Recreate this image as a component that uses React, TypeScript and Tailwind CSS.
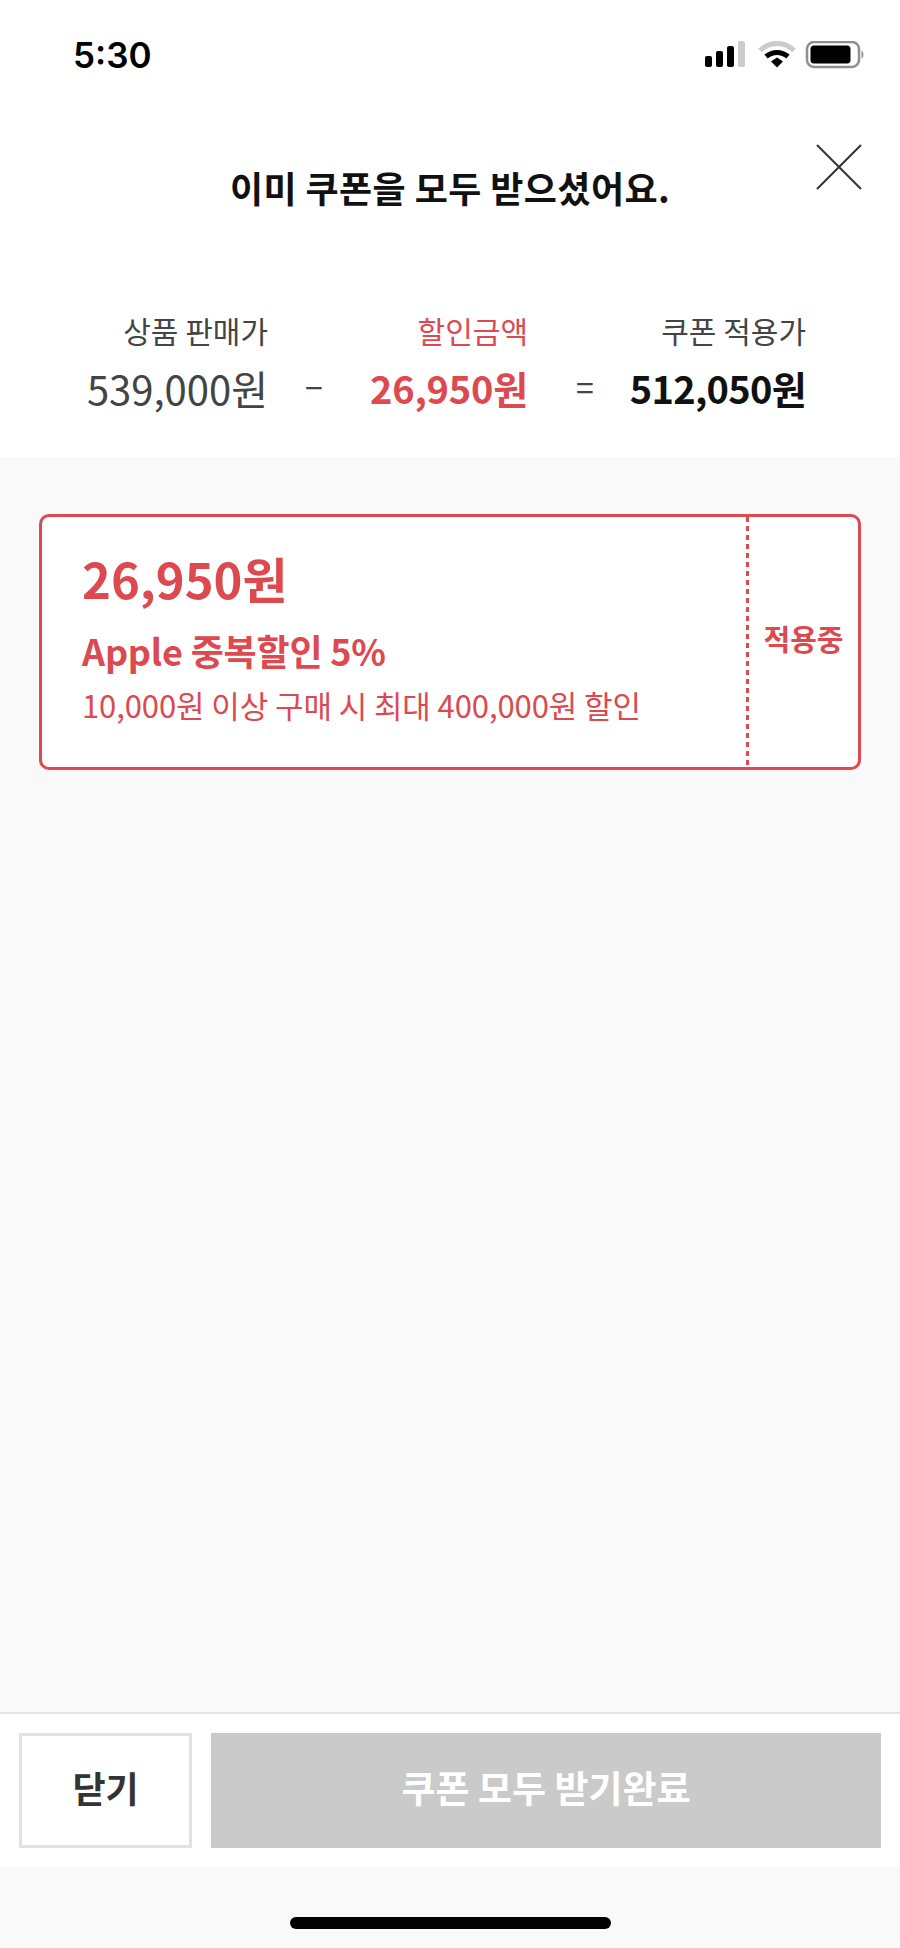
const font = "font-['Noto_Sans_CJK_KR','Noto_Sans',sans-serif]";

function StatusIcons() {
  return (
    <svg width="160" height="30" viewBox="0 0 160 30" fill="none">
      {/* signal */}
      <rect x="0" y="15" width="7" height="11" rx="2" fill="#000" />
      <rect x="11" y="10" width="7" height="16" rx="2" fill="#000" />
      <rect x="22" y="5" width="7" height="21" rx="2" fill="#000" />
      <rect x="33" y="0" width="7" height="26" rx="2" fill="#ccc" />
      {/* wifi */}
      <path d="M55 9.5C65 0 79 0 89 9.5" stroke="#ccc" strokeWidth="5" />
      <path d="M61 15.5C67.500 10 76.500 10 83 15.500" stroke="#000" strokeWidth="5" />
      <path d="M66 20.500L72 16.500L78 20.500L72 26.500Z" fill="#000" />
      {/* battery */}
      <rect x="102" y="1" width="52" height="25" rx="7" stroke="#8f8f8f" strokeWidth="2.500" />
      <rect x="105.500" y="4.500" width="40" height="18" rx="3.500" fill="#000" />
      <path d="M156.500 9.500C159 10.500 159 16.500 156.500 17.500Z" fill="#8f8f8f" />
    </svg>
  );
}

export default function App() {
  return (
    <div className={`w-[900px] h-[1948px] flex flex-col bg-[#f9f9f9] ${font}`}>
      {/* top area */}
      <div className="bg-white relative">
        <div className="h-[110px] pl-[73px] pr-[35px] flex items-center justify-between">
          <span className="font-['Inter',sans-serif] font-semibold text-[35px] text-black">5:30</span>
          <div className="pt-[2px]">
            <StatusIcons />
          </div>
        </div>
        <div className="h-[154px] flex items-center justify-center">
          <h1 className="text-[36px] leading-[48px] font-bold text-[#111] tracking-[0.4px]">이미 쿠폰을 모두 받으셨어요.</h1>
        </div>
        <button className="absolute left-[816px] top-[144px] text-[#333]">
          <svg width="46" height="46" viewBox="0 0 46 46" fill="none" stroke="currentColor" strokeWidth="2">
            <path d="M1 1L45 45M45 1L1 45" />
          </svg>
        </button>

        {/* price summary */}
        <div className="grid grid-cols-[268px_92px_168px_114px_164px] grid-rows-[40px_50px] gap-y-[13px] pt-[46px] pb-[44px] text-right items-center whitespace-nowrap">
          <span className="text-[30px] leading-[40px] text-[#444]">상품 판매가</span>
          <span />
          <span className="text-[30px] leading-[40px] text-[#dc4a50]">할인금액</span>
          <span />
          <span className="text-[30px] leading-[40px] text-[#444]">쿠폰 적용가</span>
          <span className="text-[40px] leading-[46px] text-[#444]">539,000원</span>
          <span className="text-[32px] leading-[46px] text-[#444] text-center -translate-y-[2px]">−</span>
          <span className="text-[38px] leading-[46px] font-bold text-[#dc4a50] tracking-[-0.2px]">26,950원</span>
          <span className="text-[32px] leading-[46px] text-[#444] text-center -translate-y-[2px]">=</span>
          <span className="justify-self-end text-[38px] leading-[46px] font-bold text-[#111] tracking-[-0.7px]">512,050원</span>
        </div>
      </div>

      {/* coupon list */}
      <div className="flex-1 pt-[57px] px-[39px]">
        <div className="h-[256px] flex rounded-[10px] border-[3px] border-[#dc4a50] bg-white text-[#dc4a50]">
          <div className="flex-1 pl-[40px] pt-[29px] flex flex-col whitespace-nowrap">
            <span className="text-[49px] leading-[64px] font-bold">26,950원</span>
            <span className="mt-[18px] text-[36px] leading-[44px] font-bold tracking-[-0.2px]">Apple 중복할인 5%</span>
            <span className="mt-[13px] text-[31px] leading-[40px] tracking-[-0.1px]">10,000원 이상 구매 시 최대 400,000원 할인</span>
          </div>
          <div className="w-[3px] bg-[repeating-linear-gradient(to_bottom,#dc4a50_0,#dc4a50_5px,transparent_5px,transparent_9px)]" />
          <div className="w-[109px] flex items-center justify-center pb-[8px]">
            <span className="text-[29px] leading-[40px] font-bold">적용중</span>
          </div>
        </div>
      </div>

      {/* bottom buttons */}
      <div className="h-[155px] bg-white border-t-2 border-[#e5e5e5] px-[19px] pt-[19px] flex gap-[19px]">
        <button className="w-[173px] h-[115px] border-[3px] border-[#e2e2e2] bg-white text-[36px] leading-[48px] pb-[8px] font-bold text-[#333]">닫기</button>
        <button className="flex-1 h-[115px] bg-[#cacaca] text-[37px] leading-[48px] pb-[8px] font-bold text-white">쿠폰 모두 받기완료</button>
      </div>

      {/* home indicator */}
      <div className="h-[81px] flex justify-center pt-[50px]">
        <div className="w-[321px] h-[12px] rounded-full bg-black" />
      </div>
    </div>
  );
}
